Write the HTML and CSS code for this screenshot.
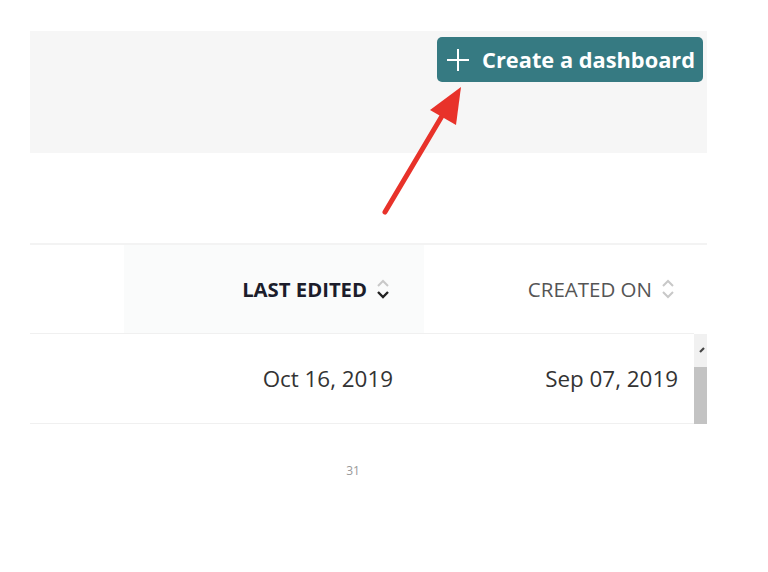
FILE: index.html
```html
<!DOCTYPE html>
<html>
<head>
<meta charset="utf-8">
<link rel="stylesheet" href="styles.css">
</head>
<body>
<div class="page">
  <div class="band">
    <button class="create">
      <svg class="plus" width="24" height="24" viewBox="0 0 24 24"><path d="M12 1V23M1 12H23" stroke="#fff" stroke-width="2" fill="none"/></svg>
      <span>Create a dashboard</span>
    </button>
  </div>
  <div class="spacer"></div>
  <div class="table">
    <div class="head">
      <div class="c0"></div>
      <div class="c1 active">LAST EDITED
        <svg class="sort" width="14" height="22" viewBox="0 0 14 22"><path d="M2 8L7 3L12 8" stroke="#c8c8c8" stroke-width="2" fill="none"/><path d="M2 14L7 19L12 14" stroke="#222" stroke-width="2.4" fill="none"/></svg>
      </div>
      <div class="c2">CREATED ON
        <svg class="sort" width="14" height="22" viewBox="0 0 14 22"><path d="M2 8L7 3L12 8" stroke="#c8c8c8" stroke-width="2" fill="none"/><path d="M2 14L7 19L12 14" stroke="#c8c8c8" stroke-width="2" fill="none"/></svg>
      </div>
      <div class="c3"></div>
    </div>
    <div class="row">
      <div class="c0"></div>
      <div class="c1">Oct 16, 2019</div>
      <div class="c2">Sep 07, 2019</div>
      <div class="scroll">
        <div class="sbtn"><svg width="13" height="32" viewBox="0 0 13 32"><path d="M6 18L10 14" stroke="#444" stroke-width="2.2" fill="none"/></svg></div>
        <div class="thumb"></div>
      </div>
    </div>
  </div>
  <div class="pagenum">31</div>
  <svg class="arrow" width="100" height="140" viewBox="0 0 100 140">
    <line x1="13" y1="128" x2="70" y2="32" stroke="#e8322a" stroke-width="5" stroke-linecap="round"/>
    <polygon points="89,3 84,41 58,26" fill="#e8322a"/>
  </svg>
</div>
</body>
</html>
```
FILE: styles.css
```css
* { box-sizing: border-box; }
html, body { margin: 0; padding: 0; background: #fff; }
body { font-family: "Open Sans", "Liberation Sans", sans-serif; }
.page { position: relative; width: 768px; height: 572px; padding: 31px 61px 0 30px; }
.band { height: 122px; background: #f6f6f6; display: flex; justify-content: flex-end; align-items: flex-start; padding: 6px 4px 0 0; }
.create { display: flex; align-items: center; gap: 12px; height: 45px; padding: 0 8px 0 9px; background: #367a82; border: none; border-radius: 5px; color: #fff; font-family: "Open Sans", sans-serif; font-weight: 700; font-size: 21.8px; letter-spacing: 0; }
.spacer { height: 90px; }
.table { display: flex; flex-direction: column; }
.head { display: grid; grid-template-columns: 94px 300px 270px 13px; height: 91px; border-top: 2px solid #f3f3f3; }
.head > div, .row > div { display: flex; align-items: center; justify-content: flex-end; }
.head .c0, .head .c1, .head .c2 { border-bottom: 1px solid #f0f0f0; }
.head .c1 { background: #fafbfb; padding-right: 34px; font-weight: 700; color: #1c1d2b; font-size: 20.3px; gap: 9px; }
.head .c2 { padding-right: 19px; color: #555; font-size: 20.5px; gap: 9px; }
.sort { flex: none; }
.row { display: grid; grid-template-columns: 94px 300px 270px 13px; height: 90px; }
.row .c0, .row .c1, .row .c2 { border-bottom: 1px solid #f0f0f0; font-size: 22.4px; color: #333; }
.row .c1 { padding-right: 31px; }
.row .c2 { padding-right: 16px; }
.row .scroll { display: flex; flex-direction: column; align-items: stretch; justify-content: flex-start; }
.sbtn { height: 33px; background: #f1f1f1; }
.sbtn svg { display: block; }
.thumb { flex: 1; background: #c3c3c3; }
.pagenum { text-align: center; width: 646px; margin-top: 38px; font-size: 12px; color: #999; }
.arrow { position: absolute; left: 372px; top: 84px; }
```
